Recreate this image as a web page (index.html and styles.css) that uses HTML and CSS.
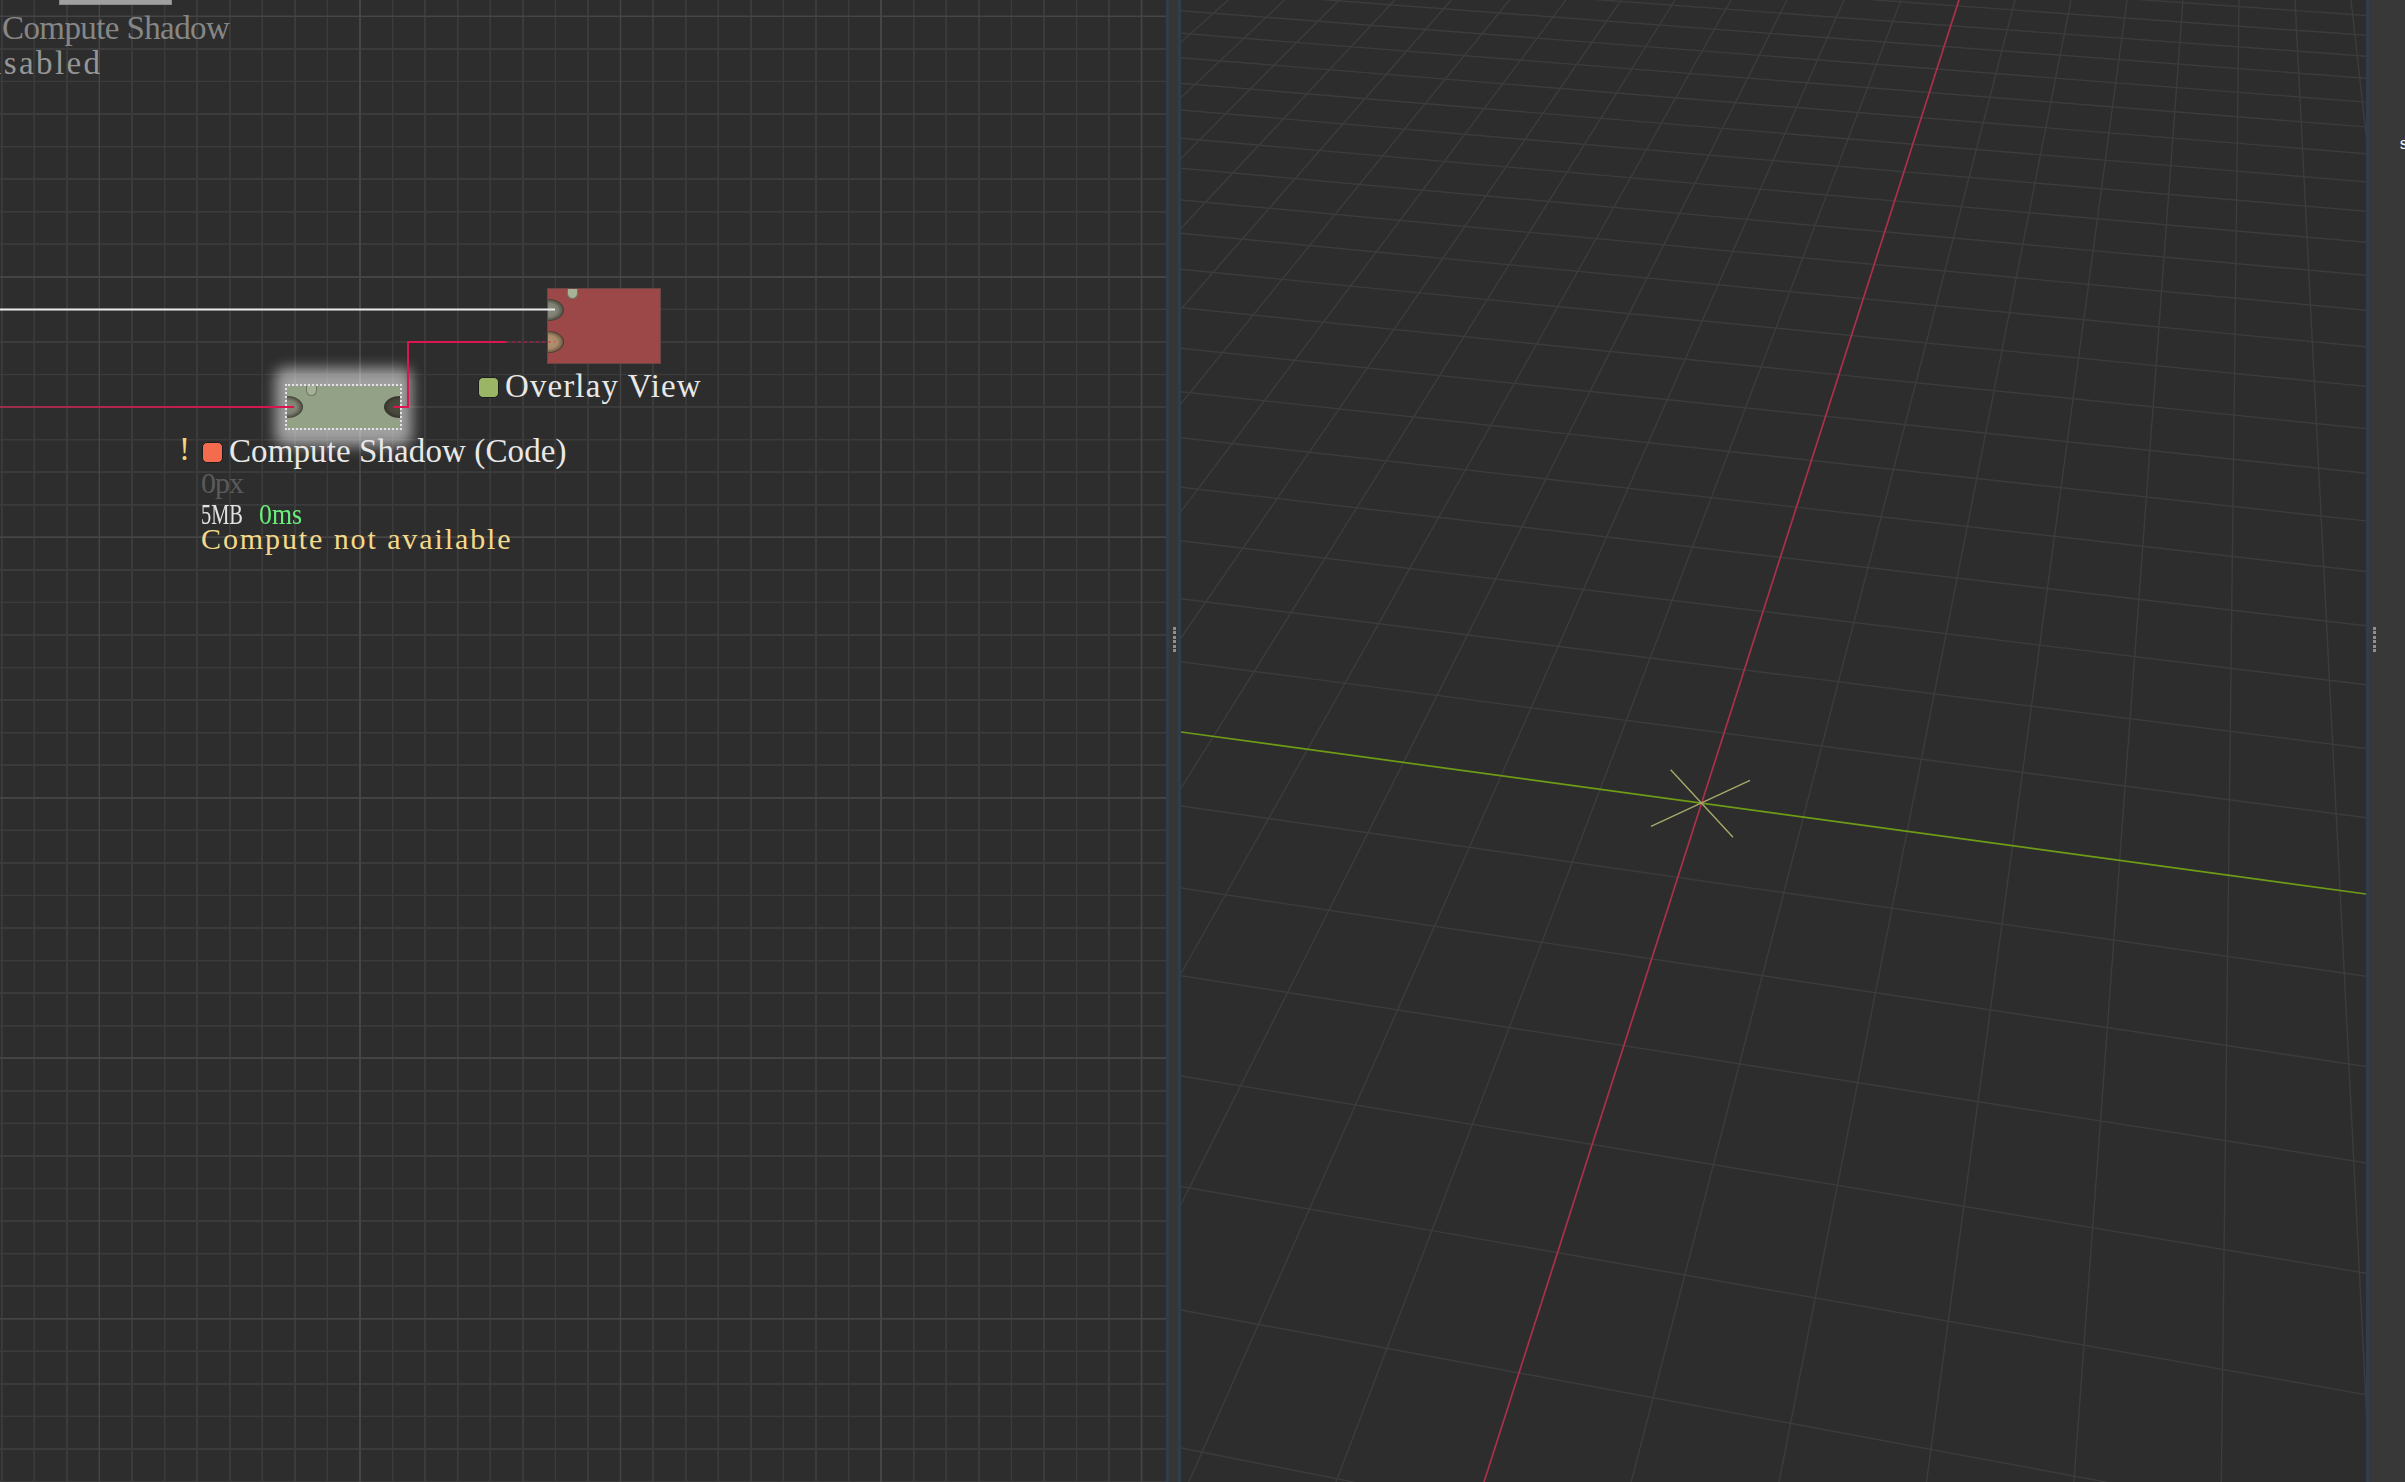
FILE: index.html
```html
<!DOCTYPE html>
<html lang="en">
<head>
  <meta charset="UTF-8">
  <title>Compute Shadow</title>
  <link rel="stylesheet" href="styles.css">
</head>
<body>
  <div class="graph">
    <!-- node cut off by the top edge -->
    <div class="cut-node"></div>
    <div class="title dim title-top">Compute Shadow</div>
    <div class="title dimmer title-disabled">Disabled</div>

    <div class="node node-overlay">
      <i class="pin pin-left pin-in"></i>
      <i class="pin pin-left pin-tan"></i>
      <i class="pin-top"></i>
    </div>
    <div class="glow"></div>
    <div class="node node-shadow">
      <i class="pin pin-left pin-in"></i>
      <i class="pin pin-right"></i>
      <i class="pin-top"></i>
    </div>

    <svg class="wires" width="1166" height="1482">
      <defs>
        <linearGradient id="wireFade" gradientUnits="userSpaceOnUse" x1="0" y1="0" x2="294" y2="0">
          <stop offset="0" stop-color="#98304a"/>
          <stop offset="1" stop-color="#dc1450"/>
        </linearGradient>
      </defs>
      <path d="M0 309.5H555" stroke="#ececec" stroke-width="2" fill="none"/>
      <path d="M0 407H294" stroke="url(#wireFade)" stroke-width="2" fill="none"/>
      <path d="M393 407H408V342H506" stroke="#dc1450" stroke-width="2" fill="none"/>
      <path d="M506 342H555" stroke="#dc1450" stroke-opacity=".4" stroke-width="2" stroke-dasharray="3 3" fill="none"/>
    </svg>

    <div class="status status-overlay"><i class="dot dot-green"></i>Overlay View</div>
    <div class="bang">!</div>
    <div class="status status-shadow"><i class="dot dot-red"></i>Compute Shadow (Code)</div>
    <div class="meta meta-size">0px</div>
    <div class="meta meta-mem"><span class="mem">5MB</span><span class="ok">0ms</span></div>
    <div class="meta meta-warn">Compute not available</div>
  </div>

  <div class="sash"><div class="grip"><i></i><i></i><i></i><i></i><i></i><i></i></div></div>

  <div class="preview">
    <svg class="floor" width="1185" height="1482" viewBox="1181 0 1185 1482">
      <!-- rows of the floor, left edge to right edge -->
      <path class="floor-line" d="M1181 -85L2366 -3M1181 -68L2366 15.5M1181 -50L2366 35.3M1181 -31L2366 56.2M1181 -11L2366 78.2M1181 10.7L2366 102.1M1181 33.3L2366 126.9M1181 57.7L2366 153.7M1181 83.3L2366 181.9M1181 110L2366 211.2M1181 138.3L2366 242.3M1181 168.3L2366 275.3M1181 200L2366 310.2M1181 233.3L2366 346.8M1181 269.3L2366 386.4M1181 307.7L2366 428.6M1181 348.3L2366 473.2M1181 391.7L2366 520.9M1181 437.7L2366 571.5M1181 487.2L2366 625.8M1181 540.7L2366 684.7M1181 598.7L2366 748.5M1181 661.7L2366 817.7M1181 806L2366 976.3M1181 888L2366 1066.5M1181 975.7L2366 1162.9M1181 1076L2366 1273.2M1181 1186.5L2366 1394.6M1181 1310L2366 1530.4M1181 1448L2366 1682"/>
      <!-- columns of the floor, top edge to bottom edge -->
      <path class="floor-line" d="M1228.2 0L-434.8 1482M1284.5 0L-287.2 1482M1339.2 0L-139.6 1482M1394.7 0L8 1482M1451.3 0L155.6 1482M1509.5 0L303.2 1482M1565.8 0L450.8 1482M1621.2 0L598.4 1482M1675 0L746 1482M1731 0L893.6 1482M1787 0L1041.2 1482M1844 0L1188.8 1482M1901 0L1336 1482M2015 0L1631.2 1482M2071 0L1779 1482M2127 0L1926.5 1482M2183 0L2073.9 1482M2239 0L2221.3 1482M2295 0L2370 1482M2351 0L2517 1482"/>
      <path class="axis-x" d="M1181 732L2366 894"/>
      <path class="axis-y" d="M1959 0L1484 1482"/>
      <path class="gizmo" d="M1670.7 769.7L1733 837.3M1750 780.3L1651 826.3"/>
    </svg>
  </div>

  <div class="sash sash-side"></div>

  <div class="side">
    <div class="grip"><i></i><i></i><i></i><i></i><i></i><i></i></div>
    <span class="side-text">s</span>
  </div>
</body>
</html>
```

FILE: styles.css
```css
html, body {
  height: 100%;
}

body {
  margin: 0;
  display: flex;
  height: 1482px;
  overflow: hidden;
  background: #2d2d2d;
  font-family: "Liberation Serif", serif;
}

.graph {
  position: relative;
  flex: 0 0 1166px;
  overflow: hidden;
  background-color: #2d2d2d;
  background-image:
    repeating-linear-gradient(90deg, transparent 0, transparent 98.4px, #454545 98.8px, #454545 100px, transparent 100.4px, transparent 260.5px),
    repeating-linear-gradient(180deg, transparent 0, transparent 15.4px, #454545 15.8px, #454545 17px, transparent 17.4px, transparent 260.45px),
    repeating-linear-gradient(90deg, transparent 0, transparent .7px, #3b3b3b 1.1px, #3b3b3b 2.4px, transparent 2.8px, transparent 32.57px),
    repeating-linear-gradient(180deg, transparent 0, transparent 15.3px, #3b3b3b 15.7px, #3b3b3b 17px, transparent 17.4px, transparent 32.56px);
}

.cut-node {
  position: absolute;
  left: 59px;
  top: -2px;
  width: 113px;
  height: 7px;
  background: #a0a0a0;
  border: 1px solid #8a8a8a;
  box-sizing: border-box;
}

.title, .status, .meta, .bang {
  position: absolute;
  white-space: nowrap;
  line-height: 36px;
}

.title, .status {
  font-size: 33px;
}

.dim { color: #868686; }
.dimmer { color: #969696; }

.title-top { left: 2px; top: 10px; letter-spacing: -.6px; }
.title-disabled { left: -34px; top: 45px; letter-spacing: 2.4px; }

.node {
  position: absolute;
  box-sizing: border-box;
}

.node-overlay {
  left: 547px;
  top: 288px;
  width: 114px;
  height: 76px;
  background: #9d4848;
  border: 1px solid #6b4646;
}

.node-shadow {
  left: 287px;
  top: 386px;
  width: 113px;
  height: 42px;
  background: #93a186;
  outline: 2px dotted #e4e4e4;
}

.glow {
  position: absolute;
  left: 275px;
  top: 368px;
  width: 137px;
  height: 78px;
  border-radius: 10px;
  background: rgba(255,255,255,0.55);
  filter: blur(7px);
}

.pin {
  position: absolute;
  box-sizing: border-box;
  width: 16px;
  height: 22px;
  border-radius: 0 16px 16px 0 / 0 11px 11px 0;
}

.pin-left { left: 0; }

.pin-in {
  background: radial-gradient(ellipse 16px 11px at 0 50%, #8a8c7d 0, #7f8173 60%, #5a5b4e 88%, #3a3a30 100%);
}

.pin-tan {
  background: radial-gradient(ellipse 16px 11px at 0 50%, #b4956f 0, #a98b69 60%, #7a654c 88%, #3c3329 100%);
}

.node-overlay .pin-in { top: 10px; }
.node-overlay .pin-tan { top: 42px; }
.node-shadow .pin-in { top: 10px; }

.pin-right {
  right: 0;
  top: 10px;
  background: radial-gradient(ellipse 16px 11px at 100% 50%, #4f4f44 0, #46463b 68%, #33332b 100%);
  border-radius: 16px 0 0 16px / 11px 0 0 11px;
}

.pin-top {
  position: absolute;
  box-sizing: border-box;
  width: 11px;
  height: 10px;
  background: #a6b296;
  border: 1px solid #6f7664;
  border-top: 0;
  border-radius: 0 0 6px 6px;
}

.node-overlay .pin-top { left: 19px; top: 0; }
.node-shadow .pin-top { left: 19px; top: 0; }

.wires {
  position: absolute;
  left: 0;
  top: 0;
}

.status { color: #e8e8e8; }
.status-overlay { left: 478px; top: 368px; letter-spacing: 1.1px; }
.status-shadow { left: 202px; top: 433px; letter-spacing: .1px; }

.dot {
  display: inline-block;
  box-sizing: border-box;
  width: 21px;
  height: 21px;
  margin-right: 6px;
  vertical-align: -1px;
  border: 1px solid #1c1c1c;
  border-radius: 5px;
}

.dot-green { background: #9ab566; }
.dot-red { background: #f56b4e; }

.bang {
  left: 179px;
  top: 431px;
  font-size: 33px;
  color: #f5d57a;
}

.meta {
  font-size: 30px;
}

.meta-size { left: 201px; top: 465px; color: #5a5a5a; letter-spacing: -1px; }
.meta-mem { left: 201px; top: 496px; color: #e2e2e2; }
.meta-warn { left: 201px; top: 521px; color: #f5d98a; letter-spacing: 1.9px; }

.mem {
  display: inline-block;
  width: 58px;
  transform: scaleX(.68);
  transform-origin: left;
}

.ok {
  display: inline-block;
  color: #69f07a;
  transform: scaleX(.86);
  transform-origin: left;
}

.sash {
  position: relative;
  box-sizing: border-box;
  flex: 0 0 15px;
  background: #363636;
  border-left: 3px solid #303e4c;
  border-right: 3px solid #303e4c;
}

.sash-side {
  flex: 0 0 3px;
  border: 0;
  background: #303e4c;
}

.grip {
  position: absolute;
  left: 3.7px;
  top: 627px;
  display: flex;
  flex-direction: column;
  gap: 1.4px;
}

.grip i {
  display: block;
  width: 3px;
  height: 3px;
  background: #8f8f8f;
}

.preview {
  flex: 0 0 1185px;
  overflow: hidden;
}

.floor {
  display: block;
}

.floor-line {
  fill: none;
  stroke: #3c3c3c;
  stroke-width: 1.4;
}

.axis-x {
  stroke: #6f9c16;
  stroke-width: 1.7;
}

.axis-y {
  stroke: #ab304c;
  stroke-width: 1.7;
}

.gizmo {
  stroke: #a8a86a;
  stroke-width: 1.4;
}

.side {
  position: relative;
  flex: 1;
  overflow: hidden;
  background: #383838;
}

.side-text {
  position: absolute;
  left: 30px;
  top: 137px;
  font-family: "Liberation Mono", monospace;
  font-size: 16px;
  line-height: 16px;
  color: #f4f8ff;
}
```
